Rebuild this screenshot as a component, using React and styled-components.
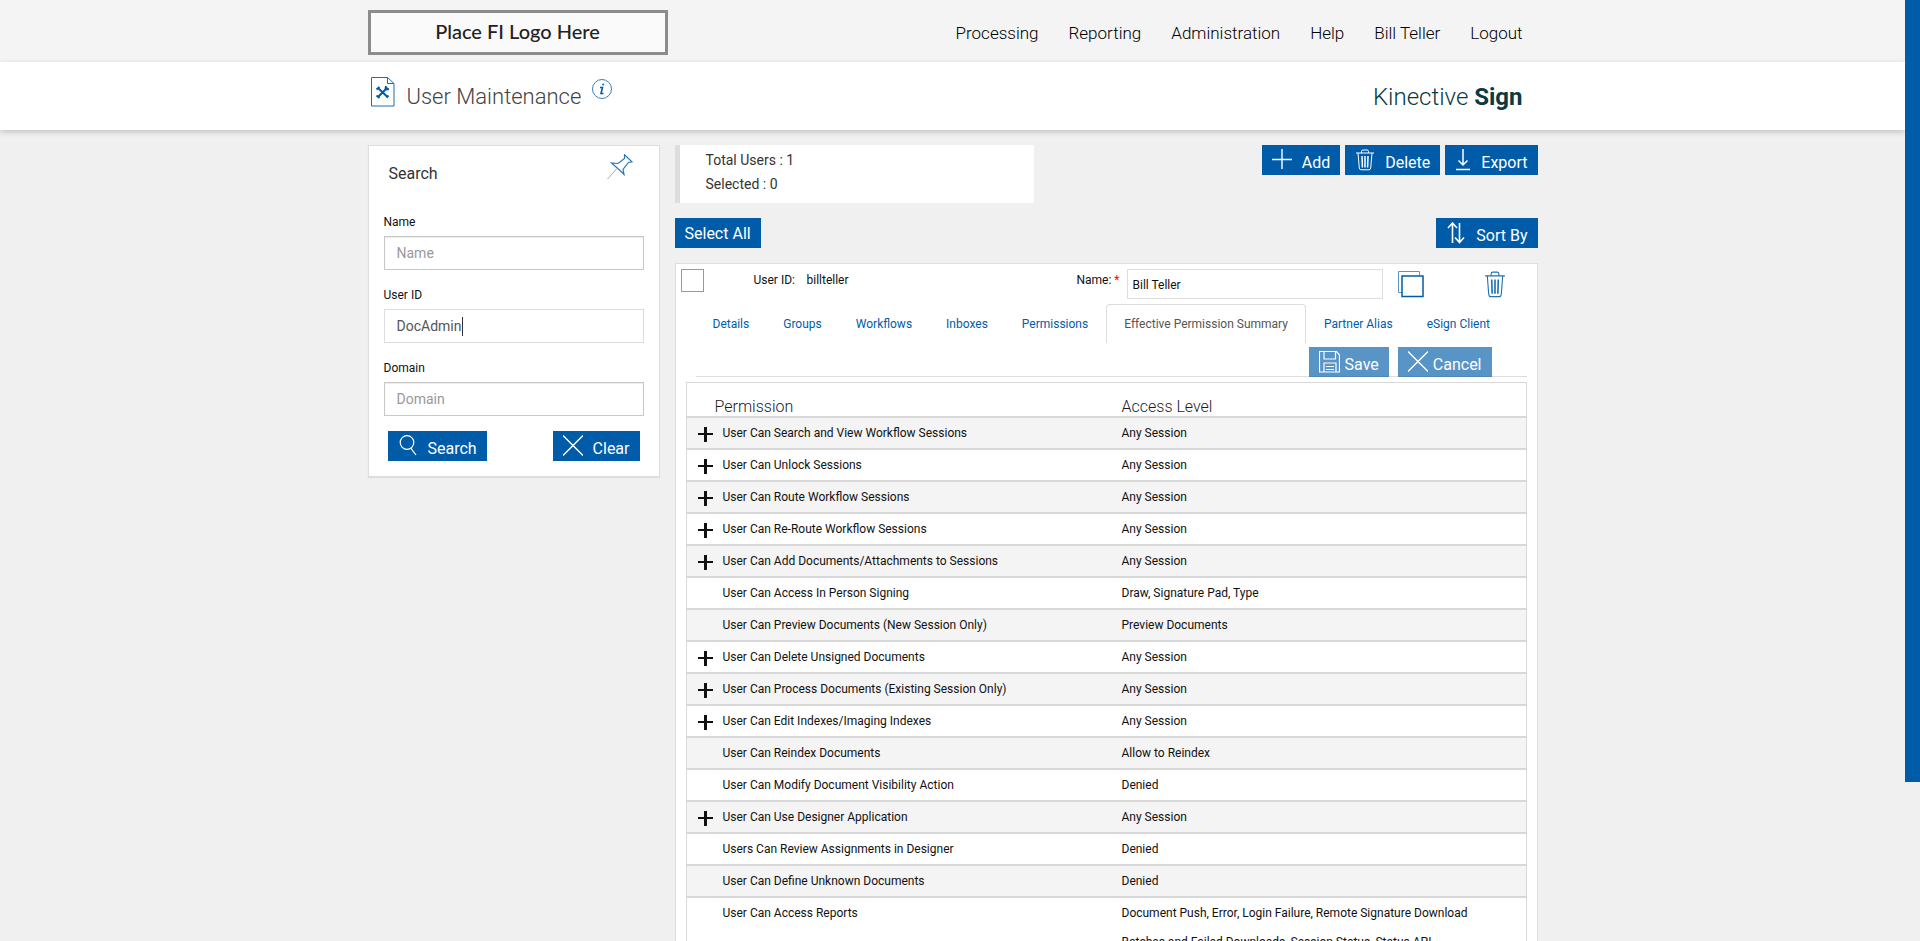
import React, { useState } from "react";
import styled, { createGlobalStyle, css } from "styled-components";

const GlobalStyle = createGlobalStyle`
  *, *::before, *::after { box-sizing: border-box; }
  body { margin: 0; background: #f0f0f0; color: #1b1b1b; font: 400 12px/18px Roboto, "Liberation Sans", sans-serif; }
  input, button { font-family: inherit; }
`;

const Frame = styled.div`
  display: flex;
  height: 100vh;
  overflow: hidden;
`;
const Page = styled.div`
  flex: 1;
  min-width: 0;
  overflow: hidden;
`;
const ScrollTrack = styled.div`
  width: 15px;
  background: #f0f0f0;
`;
const ScrollThumb = styled.div`
  height: 83.1%;
  background: #005ca9;
`;
const Container = styled.div`
  max-width: 1170px;
  margin: 0 auto;
`;
const Row = styled(Container)`
  display: flex;
  align-items: center;
  justify-content: space-between;
  height: 100%;
`;

const TopBar = styled.header`
  height: 62px;
  background: #f4f4f4;
`;
const LogoBox = styled.div`
  width: 300px;
  height: 45px;
  margin-top: 3px;
  border: 3px solid #8c8c8c;
  background: #fafafa;
  color: #222;
  font: 500 20px/36px Lato, sans-serif;
  text-align: center;
`;
const Nav = styled.nav`
  display: flex;
  gap: 30px;
  padding: 4px 15px 0 0;
`;
const NavLink = styled.a`
  color: #000;
  font-size: 17px;
  font-weight: 300;
  line-height: 24px;
  text-decoration: none;
`;

const TitleBar = styled.div`
  position: relative;
  height: 68px;
  background: #fff;
  box-shadow: 0 2px 6px rgba(0, 0, 0, 0.2);
`;
const TitleGroup = styled.div`
  display: flex;
  align-items: flex-start;
  padding: 0 0 4px 3px;
`;
const PageTitle = styled.h1`
  margin: 6px 11px 0 12px;
  color: #444;
  font-size: 22px;
  font-weight: 300;
  line-height: 28px;
`;
const InfoButton = styled.button`
  display: flex;
  margin-top: 2px;
  padding: 0;
  border: 0;
  background: none;
`;
const Brand = styled.div`
  padding: 2px 15px 0 0;
  color: #0a3a42;
  font: 300 24px/30px Roboto, sans-serif;
  b { font-weight: 700; }
`;

const Body = styled(Container)`
  display: grid;
  grid-template-columns: 292px minmax(0, 1fr);
  gap: 15px;
  align-items: start;
  padding-top: 15px;
`;
const Panel = styled.form`
  border: 1px solid #dedede;
  background: #fff;
  box-shadow: 0 1px 1px rgba(0, 0, 0, 0.08);
  padding: 8px 15px 15px;
`;
const PanelHead = styled.div`
  display: flex;
  justify-content: space-between;
  padding: 0 11px 0 5px;
  height: 58px;
`;
const PanelTitle = styled.h2`
  margin: 8px 0 0;
  color: #333;
  font-size: 16px;
  font-weight: 400;
  line-height: 24px;
`;
const Field = styled.div`
  display: flex;
  flex-direction: column;
  gap: 4px;
  margin-bottom: 15px;
`;
const Label = styled.label`
  font-size: 12px;
  line-height: 20px;
  color: #111;
`;
const InputWrap = styled.div`
  position: relative;
`;
const Caret = styled.span`
  position: absolute;
  top: 8px;
  left: 78px;
  width: 1px;
  height: 19px;
  background: #333;
  pointer-events: none;
`;
const TextInput = styled.input`
  display: block;
  width: 100%;
  height: 34px;
  padding: 6px 12px;
  border: 1px solid ${(p) => (p.$active ? "#ddd" : "#c8c8c8")};
  border-radius: 0;
  background: #fff;
  box-shadow: ${(p) => (p.$active ? "none" : "inset 0 1px 1px rgba(0, 0, 0, 0.08)")};
  color: #555;
  font-size: 14px;
  outline: none;
  &::placeholder { color: #999; opacity: 1; }
`;
const PanelActions = styled.div`
  display: flex;
  justify-content: space-between;
  padding: 0 4px;
`;

const Button = styled.button`
  display: flex;
  align-items: flex-start;
  gap: ${(p) => p.$gap || 10}px;
  height: 30px;
  padding: 0 10px;
  border: 0;
  background: #005ca9;
  color: #fff;
  font-size: 16px;
  font-weight: 400;
  line-height: ${(p) => (p.$plain ? 31 : 35)}px;
  white-space: nowrap;
  svg { flex: none; margin-top: 4px; }
  &:disabled { opacity: 0.65; }
`;

const Toolbar = styled.div`
  display: flex;
  justify-content: space-between;
  align-items: flex-start;
  margin-bottom: 15px;
`;
const Stats = styled.div`
  width: 359px;
  height: 58px;
  padding: 3px 0 0 26px;
  border-left: 5px solid #ddd;
  background: #fff;
  color: #333;
  font-size: 14px;
  line-height: 24px;
`;
const ButtonGroup = styled.div`
  display: flex;
  gap: 5px;
`;

const Card = styled.section`
  border: 1px solid #dedede;
  background: #fff;
  padding: 5px 10px 0;
`;
const UserRow = styled.div`
  display: flex;
  align-items: flex-start;
  height: 35px;
  margin-left: -5px;
`;
const CheckBox = styled.input`
  appearance: none;
  width: 23px;
  height: 23px;
  margin: 0 50px 0 0;
  border: 1px solid #999;
  background: #fff;
`;
const UserText = styled.span`
  width: ${(p) => p.$width}px;
  line-height: 22px;
  color: #111;
`;
const NameLabel = styled.label`
  width: 50px;
  line-height: 22px;
  color: #111;
`;
const Required = styled.span`
  color: #f00;
`;
const NameInput = styled.input`
  width: 256px;
  height: 30px;
  padding: 1px 5px 0;
  border: 1px solid #dedede;
  background: #fff;
  color: #111;
  font-size: 12px;
`;
const IconButton = styled.button`
  display: flex;
  margin: 2px 0 0 ${(p) => p.$space}px;
  padding: 0;
  border: 0;
  background: none;
`;

const Tabs = styled.div`
  display: flex;
  gap: 2px;
  margin-left: 11px;
`;
const Tab = styled.button`
  height: 39px;
  padding: 0 15px;
  border: 1px solid transparent;
  border-bottom: 0;
  border-radius: 4px 4px 0 0;
  background: none;
  color: #005ca9;
  font-size: 12px;
  line-height: 38px;
  white-space: nowrap;
  ${(p) => p.$active && css`
    padding: 0 17px;
    border-color: #ddd;
    color: #555;
  `}
`;
const Actions = styled.div`
  display: flex;
  justify-content: flex-end;
  gap: 9px;
  margin-left: 10px;
  padding: 4px 35px 0 0;
  height: 34px;
  box-shadow: inset 0 -1px 0 #ddd;
`;

const Table = styled.table`
  width: 100%;
  margin-top: 5px;
  border: 1px solid #d8d8d8;
  border-collapse: separate;
  border-spacing: 0;
  table-layout: fixed;
`;
const HeadCell = styled.th`
  width: ${(p) => p.$width || "auto"};
  padding: 15px 0 0 ${(p) => p.$indent || 0}px;
  font-size: 16px;
  font-weight: 300;
  line-height: 18px;
  text-align: left;
`;
const BodyRow = styled.tr`
  background: ${(p) => (p.$odd ? "#f4f4f4" : "#fff")};
`;
const Cell = styled.td`
  padding: 1px 0 0;
  border-top: 2px solid #d8d8d8;
  color: #111;
  font-size: 12px;
  line-height: 29px;
  vertical-align: top;
`;
const PermissionName = styled.div`
  display: grid;
  grid-template-columns: 25px 1fr;
  padding-left: 11px;
`;
const Expand = styled.button`
  width: 15px;
  height: 15px;
  margin-top: 8px;
  padding: 0;
  border: 0;
  background: none;
  svg { display: block; }
`;
const Access = styled.div`
  max-width: 380px;
`;

const Icon = ({ w = 22, h = 22, stroke = "#fff", width = 1, children }) => (
  <svg width={w} height={h} viewBox={`0 0 ${w} ${h}`} fill="none" stroke={stroke} strokeWidth={width} aria-hidden="true">
    {children}
  </svg>
);
const PlusIcon = () => <Icon w={20} width={1.4}><path d="M10 0v20M0 10.500h20" /></Icon>;
const CrossIcon = () => <Icon w={20} width={1.4}><path d="M0 .5l20 20M20 .5L0 20.500" /></Icon>;
const SearchIcon = () => <Icon w={20} width={1.2}><circle cx="9" cy="7.500" r="6.800" /><path d="M12.800 13.200L18 20" /></Icon>;
const TrashShape = () => (
  <>
    <path d="M1 4h18M6.500 4V2.500q0-1.500 1.500-1.500h4q1.500 0 1.500 1.500V4M3 4l1.300 15q.2 1.800 1.800 1.800h7.800q1.600 0 1.800-1.800L17 4" />
    <path d="M7 7l.4 11.500M10 7v11.500M13 7l-.4 11.500" strokeWidth="1.500" />
  </>
);
const TrashIcon = () => <Icon w={20}><TrashShape /></Icon>;
const BlueTrashIcon = () => (
  <svg width="22" height="27" viewBox="0 0 20 22" preserveAspectRatio="none" fill="none" stroke="#1f72b5" aria-hidden="true"><TrashShape /></svg>
);
const ExportIcon = () => <Icon w={16} width={1.5}><path d="M8 0v16M3.500 11.500L8 16l4.500-4.500M1 20.500h14" /></Icon>;
const SortIcon = () => <Icon w={20} width={1.6}><path d="M6.500 21V1M2 6l4.500-5L11 6M13.500 1v19.500M9 15.500l4.500 5 4.500-5" /></Icon>;
const SaveIcon = () => (
  <Icon w={21} width={1.2}><path d="M.5.500h17l3 3.500v17H.5zM5 .5v7.500h11.500V.5M5 21v-9h12v9M7 15.500h8M7 18.500h8" /></Icon>
);
const CopyIcon = () => (
  <Icon w={26} h={27} stroke="#005ca9"><path d="M4 21.500H.5V.500h21V4" stroke="#5a95c4" /><path d="M4 5h21v20.500H4z" width="21" strokeWidth="1.500" /></Icon>
);
const PinIcon = () => (
  <Icon w={26} h={26} stroke="#2878b8">
    <path d="M17.500.800l7.500 7-3.500.700-5.500 7 1 5-4.500-4.500L4.500 9l6.500.500 6.500-5z" strokeWidth="1.200" /><path d="M10 14.500L.5 25" stroke="#8fb4d0" />
  </Icon>
);
const DocToolsIcon = () => (
  <Icon w={24} h={30} stroke="#1b6fb3">
    <path d="M.5.500h16l6.500 6v22.500H.5zM16.500.500v6H23" />
    <path d="M7 11l9.500 9M16.500 10.500L7 20" strokeWidth="2" stroke="#005ca9" />
    <path d="M5.500 12.500l3-2.500M14.500 12l.5-3M15 12.500l3-.5M5.500 18.500l3 2.500M15.500 20.500l2-2" strokeWidth="2" stroke="#005ca9" />
  </Icon>
);
const InfoIcon = () => (
  <Icon w={20} h={20} stroke="#3b82b8">
    <circle cx="10" cy="10" r="9.500" />
    <path d="M8 8.500h2.500L9 14.500h2.500" stroke="#005ca9" strokeWidth="1.600" /><circle cx="11.200" cy="5.500" r=".7" stroke="#005ca9" />
  </Icon>
);
const ExpandIcon = () => <Icon w={15} h={15} stroke="#111"><path d="M0 7h15" strokeWidth="2" /><path d="M7.500 0v15" strokeWidth="3" /></Icon>;

const NAV = ["Processing", "Reporting", "Administration", "Help", "Bill Teller", "Logout"];
const TABS = ["Details", "Groups", "Workflows", "Inboxes", "Permissions", "Effective Permission Summary", "Partner Alias", "eSign Client"];
const PERMISSIONS = [
  ["User Can Search and View Workflow Sessions", "Any Session", true],
  ["User Can Unlock Sessions", "Any Session", true],
  ["User Can Route Workflow Sessions", "Any Session", true],
  ["User Can Re-Route Workflow Sessions", "Any Session", true],
  ["User Can Add Documents/Attachments to Sessions", "Any Session", true],
  ["User Can Access In Person Signing", "Draw, Signature Pad, Type"],
  ["User Can Preview Documents (New Session Only)", "Preview Documents"],
  ["User Can Delete Unsigned Documents", "Any Session", true],
  ["User Can Process Documents (Existing Session Only)", "Any Session", true],
  ["User Can Edit Indexes/Imaging Indexes", "Any Session", true],
  ["User Can Reindex Documents", "Allow to Reindex"],
  ["User Can Modify Document Visibility Action", "Denied"],
  ["User Can Use Designer Application", "Any Session", true],
  ["Users Can Review Assignments in Designer", "Denied"],
  ["User Can Define Unknown Documents", "Denied"],
  ["User Can Access Reports", "Document Push, Error, Login Failure, Remote Signature Download Batches and Failed Downloads, Session Status, Status API"],
];

export default function App() {
  const [userId, setUserId] = useState("DocAdmin");
  const [editing, setEditing] = useState(false);
  const [active, setActive] = useState(5);
  return (
    <>
      <GlobalStyle />
      <Frame>
        <Page>
          <TopBar>
            <Row>
              <LogoBox>Place FI Logo Here</LogoBox>
              <Nav>{NAV.map((n) => <NavLink key={n} href="#">{n}</NavLink>)}</Nav>
            </Row>
          </TopBar>
          <TitleBar>
            <Row>
              <TitleGroup>
                <DocToolsIcon />
                <PageTitle>User Maintenance</PageTitle>
                <InfoButton aria-label="Information"><InfoIcon /></InfoButton>
              </TitleGroup>
              <Brand>Kinective <b>Sign</b></Brand>
            </Row>
          </TitleBar>
          <Body as="main">
            <Panel onSubmit={(e) => e.preventDefault()}>
              <PanelHead>
                <PanelTitle>Search</PanelTitle>
                <PinIcon />
              </PanelHead>
              <Field>
                <Label htmlFor="name">Name</Label>
                <TextInput id="name" placeholder="Name" />
              </Field>
              <Field>
                <Label htmlFor="userId">User ID</Label>
                <InputWrap>
                  <TextInput
                    id="userId"
                    $active
                    value={userId}
                    onFocus={() => setEditing(true)}
                    onChange={(e) => setUserId(e.target.value)}
                  />
                  {!editing && <Caret />}
                </InputWrap>
              </Field>
              <Field>
                <Label htmlFor="domain">Domain</Label>
                <TextInput id="domain" placeholder="Domain" />
              </Field>
              <PanelActions>
                <Button type="submit"><SearchIcon />Search</Button>
                <Button type="reset"><CrossIcon />Clear</Button>
              </PanelActions>
            </Panel>
            <div>
              <Toolbar>
                <Stats>
                  <div>Total Users : 1</div>
                  <div>Selected : 0</div>
                </Stats>
                <ButtonGroup>
                  <Button><PlusIcon />Add</Button>
                  <Button><TrashIcon />Delete</Button>
                  <Button><ExportIcon />Export</Button>
                </ButtonGroup>
              </Toolbar>
              <Toolbar>
                <Button $plain>Select All</Button>
                <Button><SortIcon />Sort By</Button>
              </Toolbar>
              <Card>
                <UserRow>
                  <CheckBox type="checkbox" aria-label="Select billteller" />
                  <UserText $width={53}>User ID:</UserText>
                  <UserText $width={270}>billteller</UserText>
                  <NameLabel htmlFor="fullName">Name: <Required>*</Required></NameLabel>
                  <NameInput id="fullName" defaultValue="Bill Teller" />
                  <IconButton $space={15} aria-label="Copy user"><CopyIcon /></IconButton>
                  <IconButton $space={60} aria-label="Delete user"><BlueTrashIcon /></IconButton>
                </UserRow>
                <Tabs role="tablist">
                  {TABS.map((t, i) => (
                    <Tab key={t} role="tab" aria-selected={i === active} $active={i === active} onClick={() => setActive(i)}>{t}</Tab>
                  ))}
                </Tabs>
                <Actions>
                  <Button disabled $gap={5}><SaveIcon />Save</Button>
                  <Button disabled $gap={5}><CrossIcon />Cancel</Button>
                </Actions>
                <Table>
                  <thead>
                    <tr>
                      <HeadCell $width="435px" $indent={28}>Permission</HeadCell>
                      <HeadCell>Access Level</HeadCell>
                    </tr>
                  </thead>
                  <tbody>
                    {PERMISSIONS.map(([name, access, expandable], i) => (
                      <BodyRow key={name} $odd={i % 2 === 0}>
                        <Cell>
                          <PermissionName>
                            {expandable ? <Expand aria-label={`Expand ${name}`}><ExpandIcon /></Expand> : <span />}
                            {name}
                          </PermissionName>
                        </Cell>
                        <Cell><Access>{access}</Access></Cell>
                      </BodyRow>
                    ))}
                  </tbody>
                </Table>
              </Card>
            </div>
          </Body>
        </Page>
        <ScrollTrack><ScrollThumb /></ScrollTrack>
      </Frame>
    </>
  );
}
